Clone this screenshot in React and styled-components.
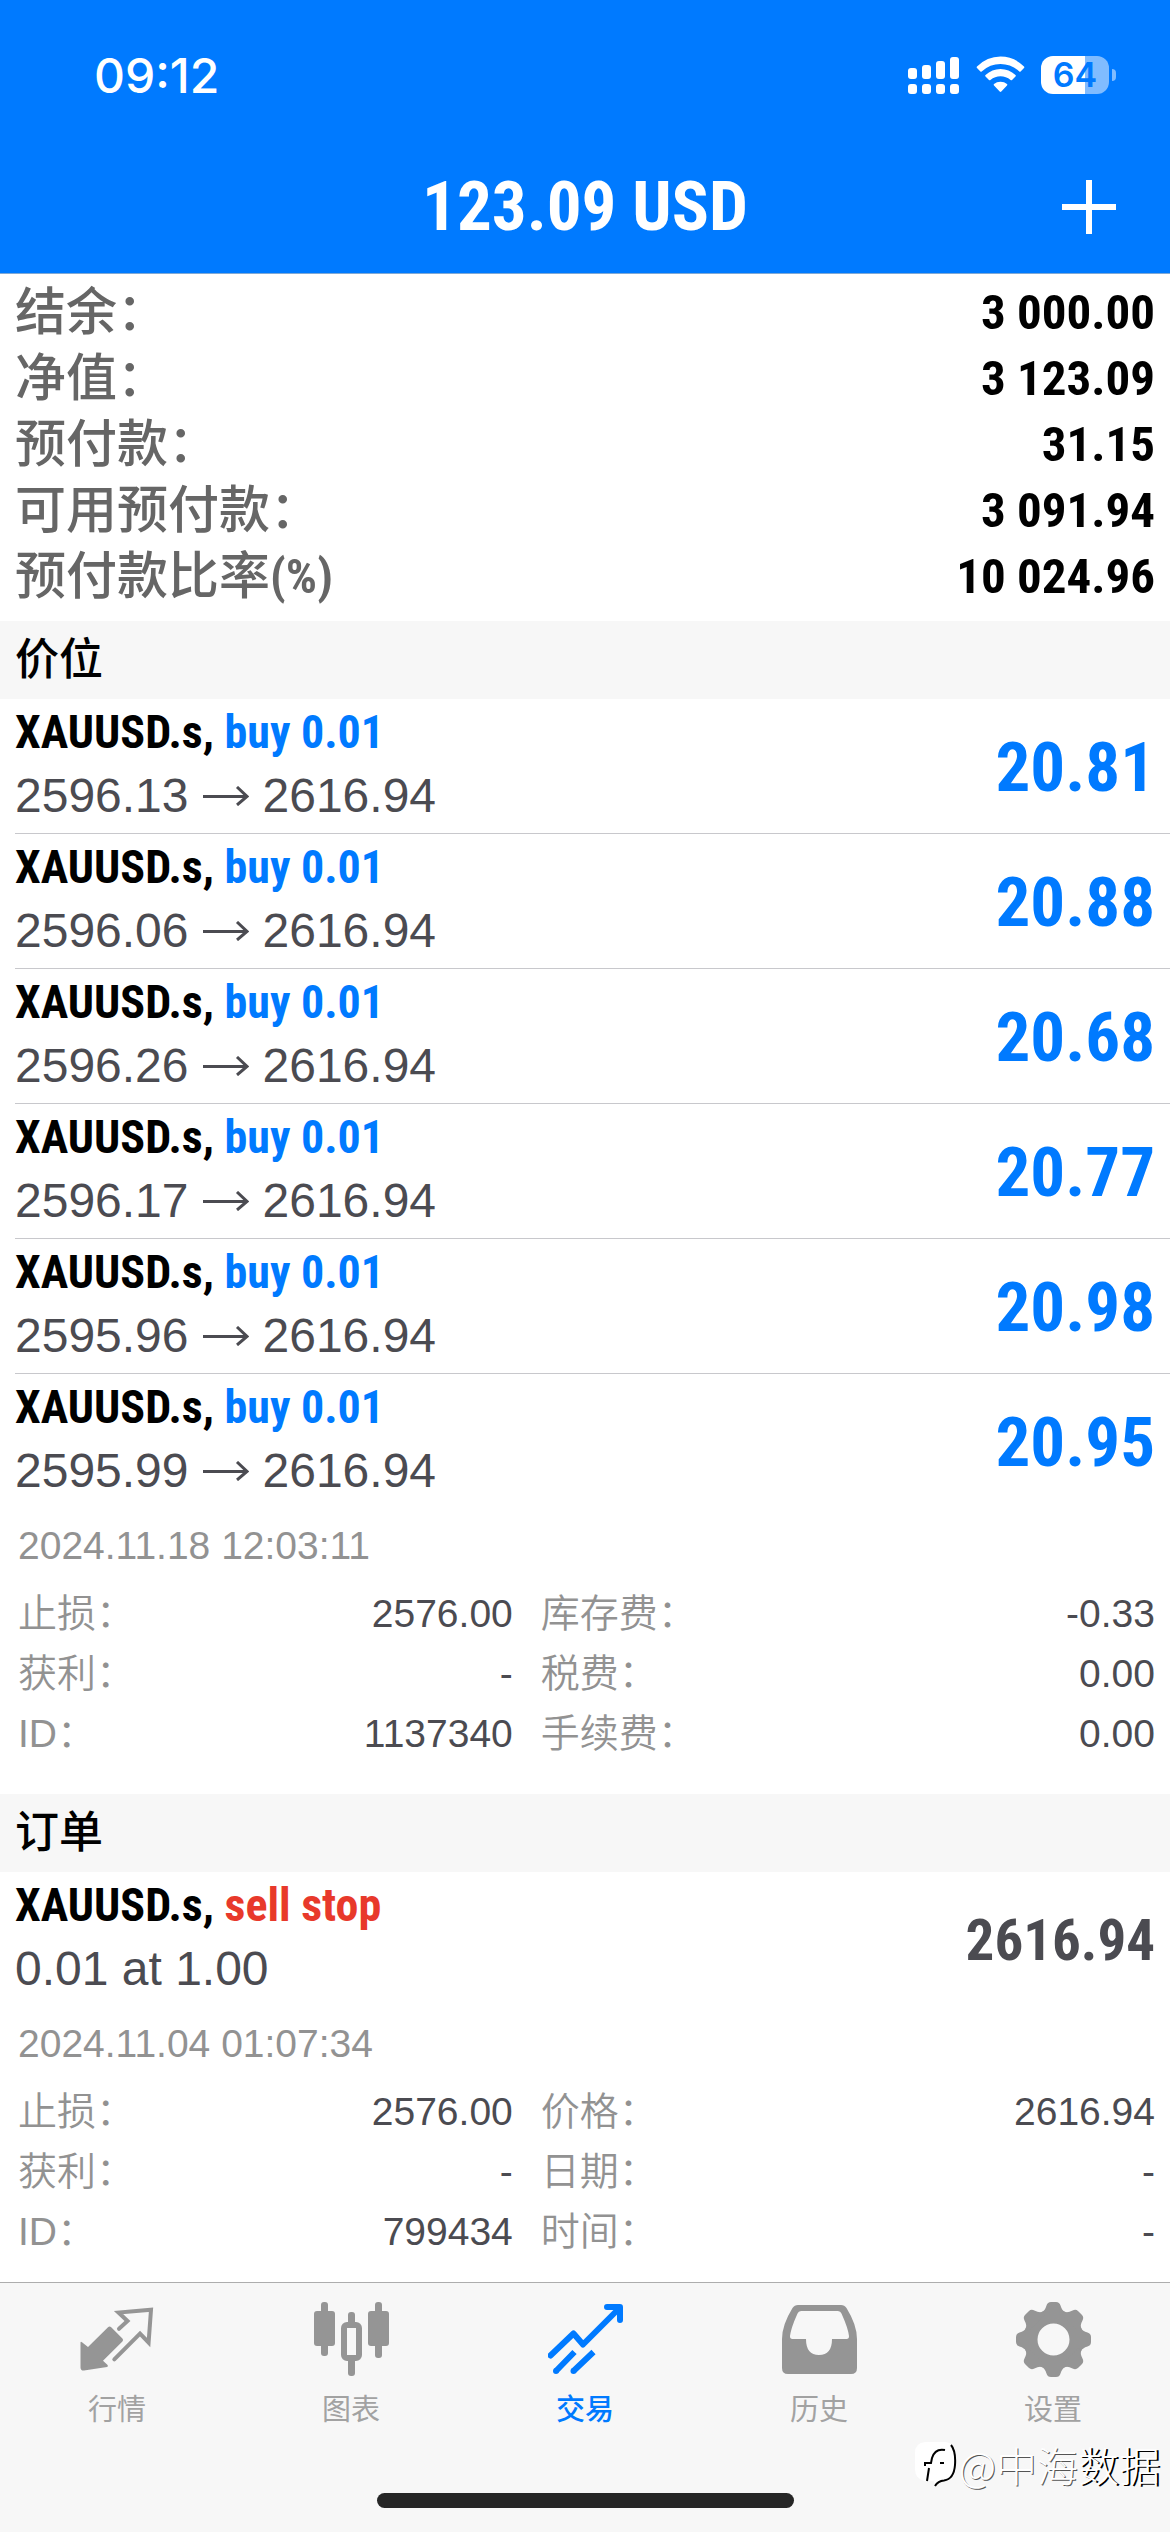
import React from "react";
import styled, { createGlobalStyle } from "styled-components";

const GlobalStyle = createGlobalStyle`
  * {
    box-sizing: border-box;
  }
  body {
    margin: 0px;
    background-color: white;
    font-family: "Liberation Sans", "Noto Sans CJK SC", sans-serif;
  }
`

const condensed = '"Roboto Condensed", Roboto, "Noto Sans CJK SC", sans-serif';

const Screen = styled.div`
  display: flex;
  flex-direction: column;
  min-height: 100vh;
  width: 100%;
`

const Header = styled.header`
  background-color: #007aff;
  border-bottom: 1px solid #7fa9d6;
  color: white;
`

const StatusBar = styled.div`
  display: flex;
  align-items: center;
  justify-content: space-between;
  height: 150px;
  padding: 0px 54px 0px 94px;
`

const Clock = styled.time`
  font-family: Inter, sans-serif;
  font-size: 48px;
  font-weight: 500;
`

const StatusIcons = styled.div`
  display: flex;
  align-items: center;
  gap: 16px;
`

const Battery = styled.div`
  display: flex;
  align-items: center;
  gap: 3px;
`

const BatteryLevel = styled.span`
  width: 68px;
  height: 38px;
  border-radius: 12px;
  background: linear-gradient(to right, white 44px, #80bcff 44px);
  color: #007aff;
  font-family: Inter, sans-serif;
  font-size: 34px;
  font-weight: 600;
  line-height: 38px;
  text-align: center;
`

const BatteryTip = styled.span`
  width: 4px;
  height: 12px;
  border-radius: 0px 6px 6px 0px;
  background-color: #80bcff;
`

const TitleBar = styled.div`
  display: grid;
  grid-template-columns: 1fr auto 1fr;
  align-items: center;
  height: 123px;
  padding: 0px 54px 9px;
`

const Title = styled.h1`
  grid-column: 2;
  margin: 0px;
  font-family: ${condensed};
  font-size: 69px;
  font-weight: bold;
  line-height: 112px;
`

const AddButton = styled.button`
  justify-self: end;
  display: flex;
  padding: 0px;
  border: none;
  background: none;
  color: white;
`

const Summary = styled.dl`
  margin: 0px;
  padding: 6px 15px 11px;
`

const SummaryRow = styled.div`
  display: flex;
  justify-content: space-between;
  line-height: 66px;
`

const SummaryLabel = styled.dt`
  display: flex;
  color: #666666;
  font-size: 51px;
  font-weight: 500;
`

const Unit = styled.span`
  font-family: ${condensed};
  font-size: 49px;
  font-weight: bold;
`

const SummaryValue = styled.dd`
  margin: 0px;
  color: black;
  font-family: ${condensed};
  font-size: 49px;
  font-weight: bold;
`

const List = styled.ul`
  margin: 0px;
  padding: 0px;
  list-style: none;
`

const SectionTitle = styled.h2`
  margin: 0px;
  padding: 0px 15px;
  background-color: #f7f7f7;
  color: black;
  font-size: 44px;
  font-weight: 500;
  line-height: 78px;
  ${List} + & {
    margin-top: 14px;
  }
`

const Item = styled.li`
  margin-left: 15px;
  border-bottom: 1px solid #c8c8cc;
  &:last-child {
    border-bottom: none;
  }
`

const ItemRow = styled.div`
  display: flex;
  align-items: center;
  justify-content: space-between;
  padding: 2px 15px 6px 0px;
`

const Symbol = styled.p`
  margin: 0px;
  color: black;
  font-family: ${condensed};
  font-size: 46px;
  font-weight: bold;
  line-height: 63px;
`

const Side = styled.span`
  color: ${({ $sell }) => $sell ? '#e8392b' : '#007aff'};
`

const Prices = styled.p`
  display: flex;
  align-items: center;
  gap: 14px;
  margin: 0px;
  color: #4b4b51;
  font-size: 48px;
  line-height: 63px;
`

const Amount = styled.p`
  margin: 0px;
  padding-top: 8px;
  color: ${({ $pending }) => $pending ? '#4b4b51' : '#007aff'};
  font-family: ${condensed};
  font-size: ${({ $pending }) => $pending ? '57px' : '69px'};
  font-weight: bold;
  line-height: 80px;
`

const Opened = styled.p`
  margin: 8px 3px;
  color: #929292;
  font-size: 39px;
  line-height: 60px;
`

const Details = styled.dl`
  display: grid;
  grid-template-columns: 29fr 36fr;
  column-gap: 28px;
  margin: 0px;
  padding: 0px 15px 16px 3px;
`

const Detail = styled.div`
  display: flex;
  justify-content: space-between;
  font-size: 39px;
  line-height: 60px;
`

const DetailLabel = styled.dt`
  color: #929292;
  font-weight: 350;
`

const DetailValue = styled.dd`
  margin: 0px;
  color: #4b4b51;
`

const Footer = styled.footer`
  position: relative;
  margin-top: auto;
  padding-bottom: 24px;
  border-top: 1px solid #adadad;
  background-color: #f7f7f7;
`

const Tabs = styled.nav`
  display: grid;
  grid-template-columns: repeat(5, 1fr);
  padding-top: 19px;
`

const Tab = styled.button`
  display: flex;
  flex-direction: column;
  align-items: center;
  gap: 8px;
  padding: 0px;
  border: none;
  background: none;
  color: ${({ $active }) => $active ? '#007aff' : '#959595'};
`

const TabLabel = styled.span`
  color: ${({ $active }) => $active ? '#007aff' : '#a2a2a2'};
  font-family: "Noto Sans CJK SC", sans-serif;
  font-size: 29px;
  font-weight: ${({ $active }) => $active ? 500 : 400};
  line-height: 44px;
`

const HomeIndicator = styled.div`
  width: 417px;
  height: 15px;
  margin: 64px auto 0px;
  border-radius: 8px;
  background-color: #262626;
`

const Watermark = styled.div`
  position: absolute;
  right: 10px;
  bottom: 38px;
  display: flex;
  align-items: center;
  gap: 2px;
  color: white;
  font-family: "Noto Sans CJK SC", sans-serif;
  font-size: 41px;
  font-weight: 300;
  line-height: 60px;
  text-shadow: 1px 1px 0px #555555;
`

const WatermarkStrong = styled.span`
  text-shadow: 2px 1px 0px black;
`

const summary = [
  { label: '结余：', value: '3 000.00' },
  { label: '净值：', value: '3 123.09' },
  { label: '预付款：', value: '31.15' },
  { label: '可用预付款：', value: '3 091.94' },
  { label: '预付款比率', unit: '(%)', value: '10 024.96' },
];

const positions = [
  { open: '2596.13', profit: '20.81' },
  { open: '2596.06', profit: '20.88' },
  { open: '2596.26', profit: '20.68' },
  { open: '2596.17', profit: '20.77' },
  { open: '2595.96', profit: '20.98' },
  {
    open: '2595.99',
    profit: '20.95',
    time: '2024.11.18 12:03:11',
    details: [
      ['止损：', '2576.00'],
      ['库存费：', '-0.33'],
      ['获利：', '-'],
      ['税费：', '0.00'],
      ['ID：', '1137340'],
      ['手续费：', '0.00'],
    ],
  },
];

const orderDetails = [
  ['止损：', '2576.00'],
  ['价格：', '2616.94'],
  ['获利：', '-'],
  ['日期：', '-'],
  ['ID：', '799434'],
  ['时间：', '-'],
];

const SignalIcon = () => (
  <svg width="52" height="38" viewBox="0 0 52 38" fill="currentColor">
    <rect x="0" y="12" width="9" height="11" rx="3" />
    <rect x="14" y="9" width="9" height="14" rx="3" />
    <rect x="28" y="5" width="9" height="18" rx="3" />
    <rect x="42" y="1" width="9" height="22" rx="3" />
    <rect x="0" y="28" width="9" height="10" rx="3" />
    <rect x="14" y="28" width="9" height="10" rx="3" />
    <rect x="28" y="28" width="9" height="10" rx="3" />
    <rect x="42" y="28" width="9" height="10" rx="3" />
  </svg>
)

const WifiIcon = () => (
  <svg width="49" height="38" viewBox="0 0 49 38" fill="currentColor">
    <path d="M1 10.5 Q11 0.5 24.5 0.5 Q38 0.5 48 10.5 Q48.8 11.3 48 12 L44.6 15.4 Q44 16 43.3 15.4 Q35 8 24.5 8 Q14 8 5.7 15.4 Q5 16 4.4 15.4 L1 12 Q0.2 11.3 1 10.5Z" />
    <path d="M9.5 19 Q16 13 24.5 13 Q33 13 39.5 19 Q40.3 19.8 39.5 20.5 L36 24 Q35.3 24.6 34.6 24 Q30 20.3 24.5 20.3 Q19 20.3 14.4 24 Q13.7 24.6 13 24 L9.5 20.5 Q8.7 19.8 9.5 19Z" />
    <path d="M18 28 Q20.7 25.7 24.5 25.7 Q28.3 25.7 31 28 Q31.8 28.8 31 29.5 L25.3 35.5 Q24.5 36.3 23.7 35.5 L18 29.5 Q17.2 28.8 18 28Z" />
  </svg>
)

const PlusIcon = () => (
  <svg width="54" height="54" viewBox="0 0 54 54" fill="currentColor">
    <rect x="0" y="24" width="54" height="6" />
    <rect x="24" y="0" width="6" height="54" />
  </svg>
)

const ArrowIcon = () => (
  <svg width="46" height="20" viewBox="0 0 46 20" fill="none" stroke="currentColor" strokeWidth="3">
    <path d="M0 10.5H43" />
    <path d="M34 1L44 10.5L34 19" />
  </svg>
)

const QuotesIcon = () => (
  <svg width="75" height="75" viewBox="0 0 75 75" fill="currentColor">
    <path d="M0.5 41 Q0.5 39 2 40.3 L8 45 L28 25.2 Q29.6 23.6 31.2 25.2 L42.4 36.4 Q43.8 38 42.4 39.5 L23 58.7 L27.6 63 Q28.6 64.5 27 65 L4 68.6 Q0.5 68.8 0.5 65.5Z" />
    <path
      d="M39 26.8 L47.5 19 L38.5 10.5 L71 7.8 L68.6 40.5 L60 31.5 L34.3 57.3"
      fill="none"
      stroke="currentColor"
      strokeWidth="4"
      strokeLinecap="round"
    />
  </svg>
)

const ChartIcon = () => (
  <svg width="75" height="75" viewBox="0 0 75 75" fill="currentColor">
    <rect x="7" y="0" width="7" height="54" rx="3" />
    <rect x="0" y="9" width="21" height="35" rx="3" />
    <rect x="34" y="10" width="7" height="14" rx="3" />
    <rect x="34" y="54" width="7" height="20" rx="3" />
    <rect x="30" y="23" width="15" height="33" rx="3" fill="none" stroke="currentColor" strokeWidth="6" />
    <rect x="61" y="0" width="7" height="56" rx="3" />
    <rect x="54" y="9" width="21" height="35" rx="3" />
  </svg>
)

const TradeIcon = () => (
  <svg width="75" height="75" viewBox="0 0 75 75" fill="none" stroke="currentColor" strokeWidth="6">
    <path d="M2.5 53.5 L25.5 31.5 L35 42.5 L70 7.5" strokeLinejoin="round" strokeLinecap="round" />
    <path d="M59 5 H72 V18" strokeLinejoin="round" strokeLinecap="round" />
    <path d="M26.5 50 L8 69 M45.5 50 L25.5 69" />
    <circle cx="8" cy="69" r="3" fill="currentColor" stroke="none" />
    <circle cx="25.5" cy="69" r="3" fill="currentColor" stroke="none" />
  </svg>
)

const HistoryIcon = () => (
  <svg width="75" height="75" viewBox="0 0 75 75" fill="currentColor">
    <path
      fillRule="evenodd"
      d="M16 3 H59 Q62.5 3 64.5 6 Q75 23 75 37 V66 Q75 72 69 72 H6 Q0 72 0 66 V37 Q0 23 10.5 6 Q12.5 3 16 3Z M19.5 9 Q16.5 9 15.3 12 Q9 26 8 34 Q7.8 37 10.5 37 H24 Q24 53 37 53 Q50 53 50 37 H64.5 Q67.2 37 67 34 Q66 26 59.7 12 Q58.5 9 55.5 9Z"
    />
  </svg>
)

const SettingsIcon = () => (
  <svg width="75" height="75" viewBox="0 0 75 75" fill="currentColor">
    <circle cx="37.5" cy="37.5" r="23" fill="none" stroke="currentColor" strokeWidth="14" />
    {[0, 45, 90, 135, 180, 225, 270, 315].map(angle => (
      <path
        key={angle}
        d="M26 10 Q29 8.5 30.5 3.5 Q31.5 0 35 0 H40 Q43.5 0 44.5 3.5 Q46 8.5 49 10 V14 H26Z"
        transform={`rotate(${angle} 37.5 37.5)`}
      />
    ))}
  </svg>
)

const WatermarkIcon = () => (
  <svg width="42" height="46" viewBox="0 0 42 46" fill="none">
    <path d="M10 1 H30 Q41 2 41 15 V26 Q41 38 30 40 Q23 40 20 45 L19 40 H10 Q0 38 0 28 V12 Q0 2 10 1Z" fill="white" />
    <path d="M36 4 Q41 10 40 24 Q39 38 29 39.5 Q23 40 20 45" stroke="black" strokeWidth="2" />
    <path d="M30 9 Q20 7 17 17 L16 22 H10 V25 M14 27 L12 40 M25 22 H29" stroke="black" strokeWidth="2" />
  </svg>
)

const tabs = [
  { label: '行情', Icon: QuotesIcon },
  { label: '图表', Icon: ChartIcon },
  { label: '交易', Icon: TradeIcon, active: true },
  { label: '历史', Icon: HistoryIcon },
  { label: '设置', Icon: SettingsIcon },
];

function DetailList({ time, details }) {
  return (
    <>
      <Opened>{time}</Opened>
      <Details>
        {details.map(([label, value]) => (
          <Detail key={label}>
            <DetailLabel>{label}</DetailLabel>
            <DetailValue>{value}</DetailValue>
          </Detail>
        ))}
      </Details>
    </>
  )
}

export default function App() {
  return (
    <Screen>
      <GlobalStyle />
      <Header>
        <StatusBar>
          <Clock>09:12</Clock>
          <StatusIcons>
            <SignalIcon />
            <WifiIcon />
            <Battery>
              <BatteryLevel>64</BatteryLevel>
              <BatteryTip />
            </Battery>
          </StatusIcons>
        </StatusBar>
        <TitleBar>
          <Title>123.09 USD</Title>
          <AddButton aria-label="New order"><PlusIcon /></AddButton>
        </TitleBar>
      </Header>

      <main>
        <Summary>
          {summary.map(({ label, unit, value }) => (
            <SummaryRow key={label}>
              <SummaryLabel>{label}{unit && <Unit>{unit}</Unit>}</SummaryLabel>
              <SummaryValue>{value}</SummaryValue>
            </SummaryRow>
          ))}
        </Summary>

        <SectionTitle>价位</SectionTitle>
        <List>
          {positions.map(position => (
            <Item key={position.open}>
              <ItemRow>
                <div>
                  <Symbol>XAUUSD.s, <Side>buy 0.01</Side></Symbol>
                  <Prices>
                    <span>{position.open}</span>
                    <ArrowIcon />
                    <span>2616.94</span>
                  </Prices>
                </div>
                <Amount>{position.profit}</Amount>
              </ItemRow>
              {position.details && <DetailList time={position.time} details={position.details} />}
            </Item>
          ))}
        </List>

        <SectionTitle>订单</SectionTitle>
        <List>
          <Item>
            <ItemRow>
              <div>
                <Symbol>XAUUSD.s, <Side $sell>sell stop</Side></Symbol>
                <Prices>0.01 at 1.00</Prices>
              </div>
              <Amount $pending>2616.94</Amount>
            </ItemRow>
            <DetailList time="2024.11.04 01:07:34" details={orderDetails} />
          </Item>
        </List>
      </main>

      <Footer>
        <Tabs>
          {tabs.map(({ label, Icon, active }) => (
            <Tab key={label} $active={active}>
              <Icon />
              <TabLabel $active={active}>{label}</TabLabel>
            </Tab>
          ))}
        </Tabs>
        <HomeIndicator />
        <Watermark>
          <WatermarkIcon />
          <span>@中海<WatermarkStrong>数据</WatermarkStrong></span>
        </Watermark>
      </Footer>
    </Screen>
  )
}
